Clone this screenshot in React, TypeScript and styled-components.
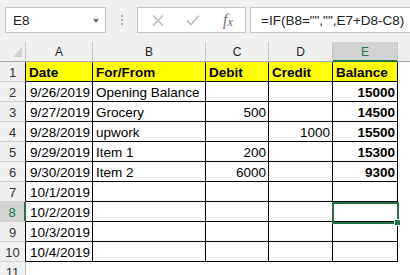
import styled, { createGlobalStyle } from "styled-components";

const GREEN = "#217346";

const cols = ["A", "B", "C", "D", "E"];
const widths = [67, 113, 63, 64, 65];

const header = ["Date", "For/From", "Debit", "Credit", "Balance"];
const data = [
  ["9/26/2019", "Opening Balance", "", "", "15000"],
  ["9/27/2019", "Grocery", "500", "", "14500"],
  ["9/28/2019", "upwork", "", "1000", "15500"],
  ["9/29/2019", "Item 1", "200", "", "15300"],
  ["9/30/2019", "Item 2", "6000", "", "9300"],
  ["10/1/2019", "", "", "", ""],
  ["10/2/2019", "", "", "", ""],
  ["10/3/2019", "", "", "", ""],
  ["10/4/2019", "", "", "", ""],
];

const GlobalStyle = createGlobalStyle`
  html, body {
    margin: 0;
    padding: 0;
    background: #ffffff;
    overflow: hidden;
  }
  body {
    font-family: "Liberation Sans", Arial, sans-serif;
  }
`;

export default function App() {
  return (
    <>
      <GlobalStyle />
      <Window>
        <FormulaBar>
          <NameBox>
            <span>E8</span>
            <Arrow />
          </NameBox>
          <Grip>
            <Dot />
            <Dot />
            <Dot />
          </Grip>
          <ActionBox>
            <IconSlot>
              <svg width="12" height="11" viewBox="0 0 12 11">
                <path d="M1 0.5 L11 10.5 M11 0.5 L1 10.5" stroke="#b9b9b9" strokeWidth="1.3" fill="none" />
              </svg>
            </IconSlot>
            <IconSlot>
              <svg width="14" height="11" viewBox="0 0 14 11">
                <path d="M1 5.5 L5 9.5 L13 0.8" stroke="#b9b9b9" strokeWidth="1.6" fill="none" />
              </svg>
            </IconSlot>
            <Fx>
              f<sub>x</sub>
            </Fx>
          </ActionBox>
          <FormulaBox>=IF(B8="","",E7+D8-C8)</FormulaBox>
        </FormulaBar>

        <Sheet>
          <Corner>
            <svg width="9" height="10" viewBox="0 0 9 10">
              <polygon points="9,0 9,10 0,10" fill="#cfcfcf" />
            </svg>
          </Corner>
          {cols.map((c) => (
            <ColHeader key={c} $active={c === "E"}>
              {c}
            </ColHeader>
          ))}
          <ColHeader $blank />

          <RowHeader $boxed>1</RowHeader>
          {header.map((h) => (
            <Cell key={h} $head>
              {h}
            </Cell>
          ))}
          <Cell $outside />

          {data.map((row, i) => {
            const n = i + 2;
            return [
              <RowHeader key={`h${n}`} $boxed $active={n === 8}>
                {n}
              </RowHeader>,
              ...row.map((v, j) => (
                <Cell
                  key={`${n}-${j}`}
                  $right={j !== 1}
                  $bold={j === 4}
                >
                  {v}
                  {n === 8 && j === 4 && (
                    <Selection>
                      <FillHandle />
                    </Selection>
                  )}
                </Cell>
              )),
              <Cell key={`f${n}`} $outside />,
            ];
          })}

          <RowHeader>11</RowHeader>
        </Sheet>
      </Window>
    </>
  );
}

const Window = styled.div`
  width: 410px;
  height: 275px;
  overflow: hidden;
  background: #ffffff;
`;

const FormulaBar = styled.div`
  height: 42px;
  box-sizing: border-box;
  padding: 7px 0 0 5px;
  display: flex;
  align-items: flex-start;
  background: #efefef;
`;

const NameBox = styled.div`
  width: 101px;
  height: 26px;
  box-sizing: border-box;
  border: 1px solid #c6c6c6;
  background: #ffffff;
  display: flex;
  align-items: center;
  justify-content: space-between;
  padding: 0 6px 0 7px;
  font-size: 13.5px;
  color: #222;
`;

const Arrow = styled.span`
  width: 0;
  height: 0;
  border-left: 3.5px solid transparent;
  border-right: 3.5px solid transparent;
  border-top: 4px solid #6d6d6d;
  margin-top: 1px;
`;

const Grip = styled.div`
  width: 31px;
  height: 26px;
  display: flex;
  flex-direction: column;
  align-items: center;
  justify-content: center;
  gap: 2px;
`;

const Dot = styled.span`
  width: 2px;
  height: 2px;
  background: #b4b4b4;
`;

const ActionBox = styled.div`
  width: 109px;
  height: 26px;
  box-sizing: border-box;
  border: 1px solid #c6c6c6;
  background: #ffffff;
  display: grid;
  grid-template-columns: 35px 35px 1fr;
  align-items: center;
  padding-left: 2px;
  margin-right: 4px;
`;

const IconSlot = styled.span`
  display: flex;
  justify-content: center;
  align-items: center;
`;

const Fx = styled.span`
  font-family: "Liberation Serif", "Times New Roman", serif;
  font-style: italic;
  font-size: 16px;
  color: #6e6e6e;
  padding-left: 13px;
  line-height: 1;

  sub {
    font-size: 12px;
    vertical-align: -1px;
  }
`;

const FormulaBox = styled.div`
  flex: 1;
  height: 26px;
  box-sizing: border-box;
  border: 1px solid #c6c6c6;
  border-right: none;
  background: #ffffff;
  display: flex;
  align-items: center;
  padding-left: 10px;
  font-size: 13.5px;
  color: #222;
  white-space: nowrap;
`;

const Sheet = styled.div`
  display: grid;
  grid-template-columns: 26px ${widths.map((w) => `${w}px`).join(" ")} 1fr;
  grid-auto-rows: 20px;
  font-size: 13.5px;
  color: #000;
`;

const Corner = styled.div`
  background: #efefef;
  box-sizing: border-box;
  border-right: 1px solid #c6c6c6;
  border-bottom: 1px solid #a8a8a8;
  display: flex;
  align-items: flex-end;
  justify-content: flex-end;
  padding: 0 3px 4px 0;
`;

const ColHeader = styled.div<{ $active?: boolean; $blank?: boolean }>`
  box-sizing: border-box;
  background: ${(p) => (p.$active ? "#d3d3d3" : "#efefef")};
  color: ${(p) => (p.$active ? GREEN : "#222")};
  border-right: ${(p) => (p.$blank ? "none" : "1px solid #c6c6c6")};
  border-bottom: ${(p) => (p.$active ? `2px solid ${GREEN}` : "1px solid #a8a8a8")};
  font-size: 12px;
  display: flex;
  align-items: center;
  justify-content: center;
  padding-top: ${(p) => (p.$active ? "1px" : "0")};
`;

const RowHeader = styled.div<{ $active?: boolean; $boxed?: boolean }>`
  box-sizing: border-box;
  background: ${(p) => (p.$active ? "#d3d3d3" : "#efefef")};
  color: ${(p) => (p.$active ? GREEN : "#333")};
  border-right: ${(p) =>
    p.$active ? `2px solid ${GREEN}` : p.$boxed ? "1px solid #000" : "1px solid #c6c6c6"};
  border-bottom: 1px solid #d0d0d0;
  font-size: 13px;
  line-height: 19px;
  padding-top: 1px;
  text-align: center;
`;

const Cell = styled.div<{ $head?: boolean; $right?: boolean; $bold?: boolean; $outside?: boolean }>`
  position: relative;
  box-sizing: border-box;
  background: ${(p) => (p.$head ? "#ffff00" : "#ffffff")};
  border-right: ${(p) => (p.$outside ? "none" : "1px solid #000")};
  border-bottom: ${(p) => (p.$outside ? "none" : "1px solid #000")};
  font-weight: ${(p) => (p.$head || p.$bold ? 700 : 400)};
  text-align: ${(p) => (p.$right && !p.$head ? "right" : "left")};
  padding: 2px 2px 0 3px;
  line-height: 17px;
  white-space: nowrap;
`;

const Selection = styled.span`
  position: absolute;
  left: -1px;
  top: 0;
  width: 67px;
  height: 22px;
  box-sizing: border-box;
  border: 2px solid ${GREEN};
  z-index: 2;
`;

const FillHandle = styled.span`
  position: absolute;
  left: 60px;
  top: 15px;
  width: 5px;
  height: 5px;
  background: ${GREEN};
  border: 1px solid #ffffff;
`;
